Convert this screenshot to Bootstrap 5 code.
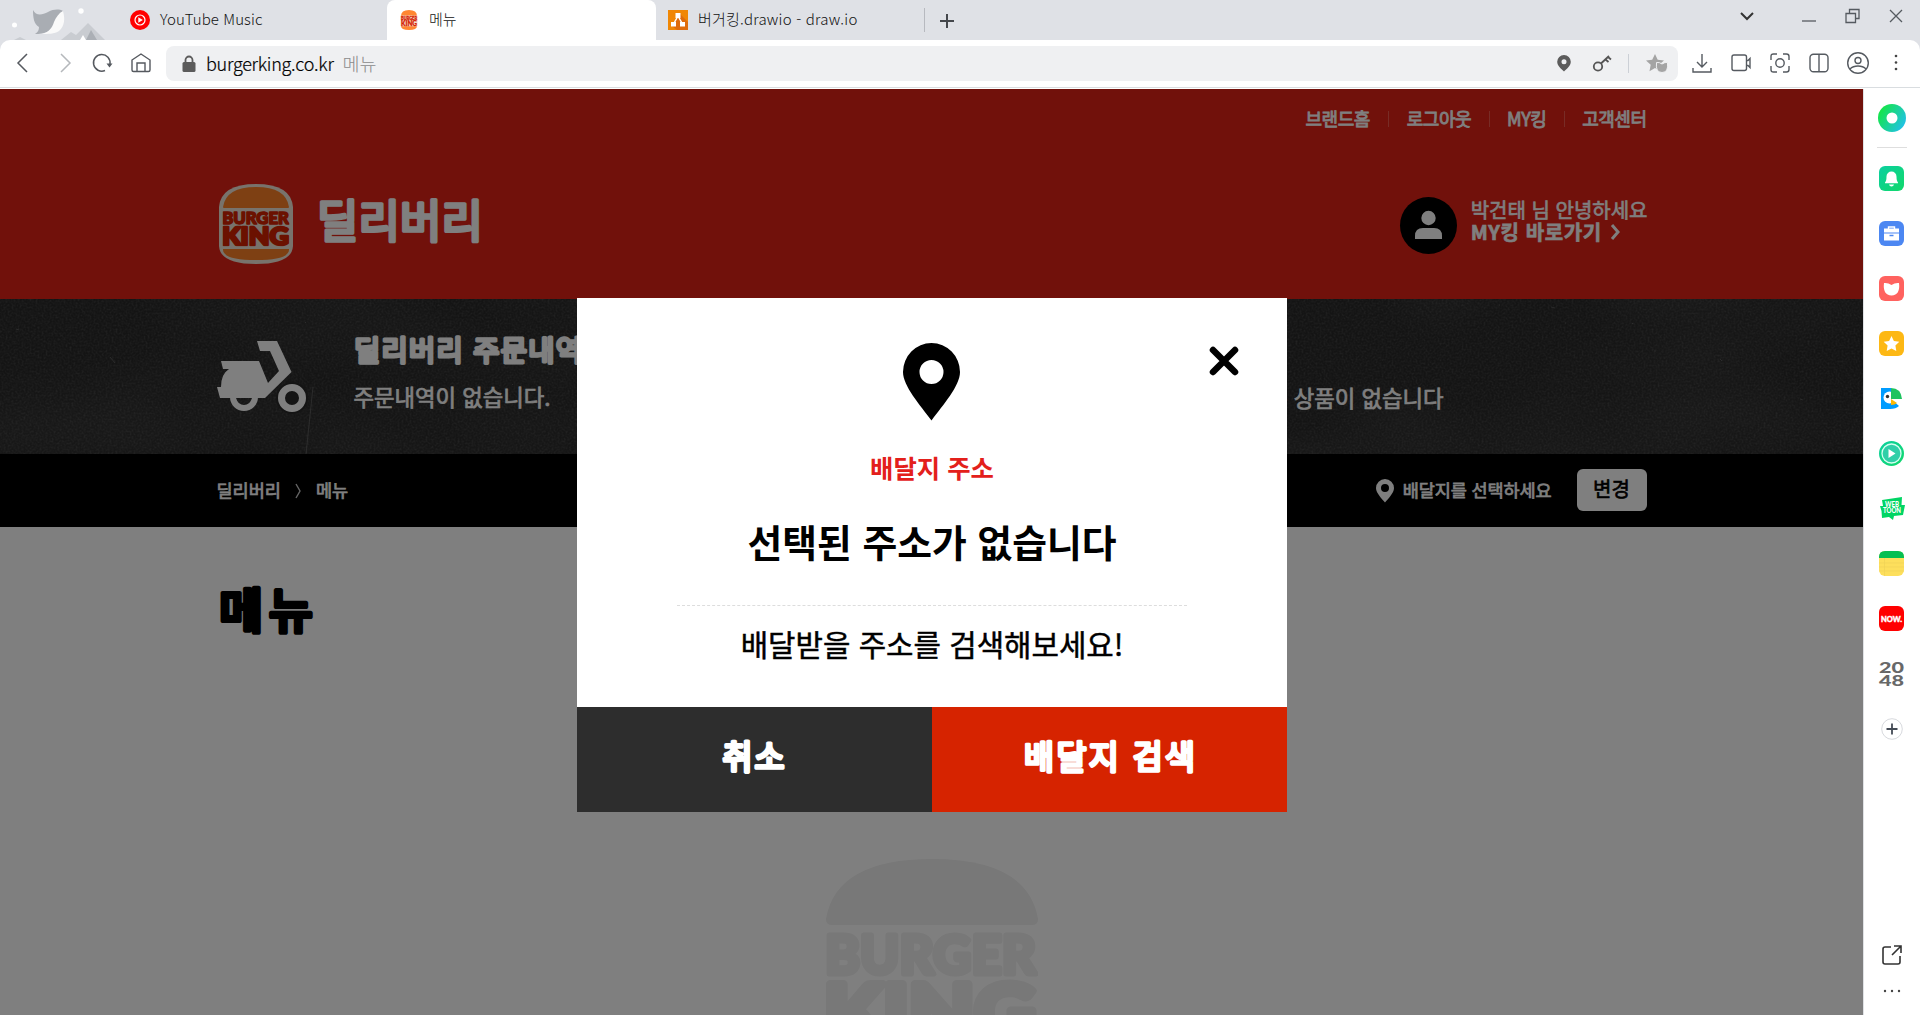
<!DOCTYPE html>
<html lang="ko">
<head>
<meta charset="utf-8">
<title>메뉴</title>
<link href="https://cdn.jsdelivr.net/npm/bootstrap@5.3.0/dist/css/bootstrap.min.css" rel="stylesheet">
<style>
  body{width:1920px;height:1015px;overflow:hidden;font-family:"Noto Sans CJK KR","Noto Sans",sans-serif;color:#000}
  svg{display:block;flex:none;overflow:visible}
  .tabstrip{height:40px;background:#dfe1e6;font-size:15px;font-weight:300;color:#111;line-height:37px}
  .tab-a{width:387px;padding-left:130px}
  .tab-b{width:269px;background:#fff;border-radius:8px 8px 0 0;padding-left:13px}
  .tab-c{width:269px;padding-left:12px}
  .tab-c::after{content:"";width:1.5px;height:24px;background:#b7b9bf;margin:8px 0 0 auto}
  .tab-ico{margin-top:10px}
  .scenery{position:absolute;left:0;top:0;overflow:hidden}
  .toolbar-row{height:48px;background:#fff;border-radius:10px 10px 0 0;border-bottom:1px solid #d9dde0;padding-left:11px}
  .toolbar-row>svg{margin-top:-1px}
  .chrome{background:linear-gradient(#dfe1e6 80px,#fff 80px);height:89px}
  .addr{width:1512px;height:35px;background:#eff0f2;border-radius:8px;margin-left:13px;padding-left:16px;font-size:18px;line-height:32px}
  .addr span{margin-top:-2px}
  .site{width:1863px;height:926px;position:relative;overflow:hidden;background:#fff}
  .wrap{width:1430px;margin:0 auto}
  .hdr{height:210px;background:#e22216;color:#fff}
  .util{height:58px;font-size:18px;letter-spacing:-.5px;-webkit-text-stroke:.8px #fff}
  .util i{width:1px;height:16px;background:#f0584c;margin:1px 18px 0 18px}
  .util i:nth-of-type(n+2){margin-right:17px}
  .brand-row{height:152px}
  .fat{font-family:"Noto Sans CJK KR",sans-serif;fill:currentColor;stroke:currentColor;stroke-linejoin:round;stroke-linecap:round}
  .hello{font-size:20px;line-height:22px;margin-left:14px;margin-right:-1px;margin-top:-5px;white-space:nowrap;-webkit-text-stroke:.6px #fff}
  .slate{height:155px;background:#292929;color:#fff;position:relative}
  .slate>svg{position:absolute;left:0;top:0}
  .slate .wrap{position:relative}
  .order{margin-left:48px;line-height:48px;margin-top:-10px;white-space:nowrap;font-size:22.3px;-webkit-text-stroke:.7px #fff}
  .crumbs{height:73px;background:#000;color:#fff;font-size:17.5px;line-height:28px;-webkit-text-stroke:.7px #fff}
  .crumbs span{margin-top:-2px}
  .change{width:70px;height:42px;border-radius:6px;background:#fff;color:#000;font-size:20px;line-height:39px;text-align:center;-webkit-text-stroke:.6px #000;margin:-1px 0 0 25px}
  .page-title{margin:0;padding-top:52px;height:112px;color:#000}
  .mark-bk{margin:220px auto 0}
  .shade{position:absolute;inset:0;background:rgba(0,0,0,.5);padding-top:209px}
  .popup{width:710px;height:514px;background:#fff;margin-left:577px;position:relative;text-align:center}
  .popup .close-x{position:absolute;left:632px;top:48px}
  .popup-body{height:409px;padding-top:45px}
  .lbl{font-size:25.4px;font-weight:700;line-height:40px;color:#e3201b;margin-top:26px}
  .big{font-size:37.8px;font-weight:700;line-height:56px;margin-top:26px}
  .dash{width:510px;border-top:1px dashed #ddd;margin:36px auto 0}
  .msg{font-size:29.8px;line-height:44px;margin-top:15px;-webkit-text-stroke:.5px #000}
  .pbtn{width:355px;height:105px}
  .dock{width:57px;height:926px;background:#fff;border-left:1px solid #dfe1e4;padding-right:1px}
  .dock .slot{height:55px;display:flex;align-items:center;justify-content:center}
</style>
<script src="https://cdn.jsdelivr.net/npm/bootstrap@5.3.0/dist/js/bootstrap.bundle.min.js"></script>
</head>
<body>
<svg width="0" height="0" style="position:absolute">
  <defs>
    <linearGradient id="gg" x1="0" y1="0.2" x2="1" y2="0.8"><stop offset="0" stop-color="#14e83c"/><stop offset="1" stop-color="#22bff0"/></linearGradient>
    <linearGradient id="gb" x1="0" y1="0" x2="1" y2="1"><stop offset="0" stop-color="#0bd0a0"/><stop offset="1" stop-color="#12d86a"/></linearGradient>
    <symbol id="words" viewBox="0 0 212 112">
      <g font-family="Lato,sans-serif" font-weight="900" stroke-linejoin="round" fill="currentColor" stroke="currentColor">
        <text x="-1" y="42" font-size="54" stroke-width="5" textLength="211" lengthAdjust="spacingAndGlyphs">BURGER</text>
        <text x="-2" y="107" font-size="76" stroke-width="8" textLength="212" lengthAdjust="spacingAndGlyphs">KING</text>
      </g>
    </symbol>
  </defs>
</svg>

<div class="chrome">
  <div class="tabstrip d-flex position-relative">
    <svg class="scenery" width="130" height="40"><circle cx="14.500" cy="25" r="2.500" fill="#fff"/><circle cx="81" cy="11" r="2.700" fill="#fff"/><path d="M33 10c3 6 9 5 15 2 6-3 11-3 15-1-4 5-6 10-9 15-4 6-10 8-19 8 3-2 4-4 4-7-5-3-6-9-6-17z" fill="#a9adb3"/><path d="M63 11c2 7 2 15-4 20-4 3-12 3-17 3 7-2 10-6 12-12 2-5 5-9 9-11z" fill="#fafafa"/><path d="M61 40l10-8 5 3 12-12 17 17z" fill="#c9ccd1"/><path d="M86 40l5-10 6 10z" fill="#abafb5"/><path d="M80 40l3-5 3 5z" fill="#fff"/><path d="M14 40l6-3 6 3z" fill="#c9ccd1"/></svg>
    <div class="tab-a d-flex"><svg width="20" height="20" viewBox="0 0 20 20" class="tab-ico"><circle cx="10" cy="10" r="10" fill="#f00"/><circle cx="10" cy="10" r="5" fill="none" stroke="#fff" stroke-width="1.200"/><path d="M8.300 7.300l4.500 2.700-4.500 2.700z" fill="#fff"/></svg><span style="margin-left:10px;letter-spacing:.1px">YouTube Music</span></div>
    <div class="tab-b d-flex"><svg width="18" height="20" viewBox="0 0 18 20" class="tab-ico"><path d="M1 6q0-6 8-6t8 6zM1 16h16q0 4-8 4t-8-4z" fill="#ff8732"/><path d="M.5 5.500h17v10.800H.5z" fill="#f3d9c8"/><g font-family="Lato" font-weight="900" fill="#d62300" stroke="#d62300" stroke-width=".3"><text x="1" y="9.800" font-size="5" textLength="16" lengthAdjust="spacingAndGlyphs">BURGER</text><text x="1" y="15.700" font-size="7.500" textLength="16" lengthAdjust="spacingAndGlyphs">KING</text></g></svg><span style="margin-left:11px">메뉴</span></div>
    <div class="tab-c d-flex"><svg width="20" height="20" viewBox="0 0 20 20" class="tab-ico"><rect width="20" height="20" fill="#f08705"/><path d="M12 4l8 8v8H9l-5-4z" fill="#df6c0c"/><path d="M10 6L5.500 14M10 6l4.500 8" stroke="#fff" stroke-width="1.500"/><path d="M7.500 3h5v5h-5zM3 12h5v4.500H3zM12 12h5v4.500h-5z" fill="#fff"/></svg><span style="margin-left:10px;letter-spacing:.2px">버거킹.drawio - draw.io</span></div>
    <svg width="16" height="16" viewBox="0 0 16 16" style="margin:13px 0 0 14px"><path d="M8 1v14M1 8h14" stroke="#44474c" stroke-width="2"/></svg>
    <div class="ms-auto d-flex">
      <svg width="190" height="40" fill="none" stroke="#555a60" stroke-width="1.300"><path d="M11 13l6 6 6-6" stroke="#333" stroke-width="2"/><path d="M72 21h14"/><path d="M116 13.500h9.500v9h-9.500zM119.500 13V9.500h9.500v9h-3"/><path d="M160 10l12 12M172 10l-12 12"/></svg>
    </div>
  </div>
  <div class="toolbar-row d-flex align-items-center">
    <svg width="24" height="24" fill="none" stroke="#55595f" stroke-width="1.500"><path d="M16 3L7 12l9 9"/></svg>
    <svg width="24" height="24" fill="none" stroke="#b5b8bc" stroke-width="1.500" style="margin-left:18px"><path d="M8 3l9 9-9 9"/></svg>
    <svg width="24" height="24" fill="none" stroke="#55595f" stroke-width="1.500" style="margin-left:14px"><path d="M14 19.500A8.300 8.300 0 1 1 19 13"/><path d="M15.500 12.500h6l-3 4z" fill="#55595f" stroke="none"/></svg>
    <svg width="24" height="24" fill="none" stroke="#55595f" stroke-width="1.400" style="margin-left:14px"><path d="M3 9l9-6 9 6v10q0 1.500-1.500 1.500h-15Q3 20.500 3 19zM8 20v-8h8v8"/></svg>
    <div class="addr d-flex align-items-center">
      <svg width="14" height="18" viewBox="0 0 14 18"><rect x="0.500" y="7" width="13" height="10" rx="1.500" fill="#5b5b5b"/><path d="M3.500 8V5a3.500 3.500 0 0 1 7 0v3" fill="none" stroke="#5b5b5b" stroke-width="1.800"/></svg>
      <span style="margin-left:10px;letter-spacing:-.28px;font-weight:300;-webkit-text-stroke:.2px">burgerking.co.kr</span><span style="margin-left:9px;color:#8b8b8b;font-weight:300;font-size:18.500px">메뉴</span>
      <svg width="130" height="35" class="ms-auto"><path d="M16 9a6.800 6.800 0 0 1 6.800 6.800c0 4-4.300 7.500-6.800 9.700-2.500-2.200-6.800-5.700-6.800-9.700A6.800 6.800 0 0 1 16 9zm0 4.200a2.500 2.500 0 1 0 0 5 2.500 2.500 0 0 0 0-5z" fill="#5c5c5c"/><g fill="none" stroke="#555" stroke-width="1.800"><circle cx="50" cy="20.500" r="4.200"/><path d="M53 17.500l8-7.500M57.500 13.500l3 2.500M60 11l3 2.500"/></g><path d="M80.500 8v19" stroke="#ccd0d6"/><path d="M107 8l2.700 5.800 6.300.7-4.700 4 .9 6.500-5.200-3-5.500 3.200 1.200-6.500-4.700-4.200 6.200-.7z" fill="#a4a4a4"/><path d="M108.500 16.500q3-.5 5.500 1.500 3-2 5.500-1.500 1.200 10-5.500 10t-5.500-10z" fill="#a4a4a4" stroke="#eff0f2"/></svg>
    </div>
    <div class="d-flex" style="gap:15px;margin:-1px 0 0 11.500px">
      <svg width="24" height="24" fill="none" stroke="#555a60" stroke-width="1.400"><path d="M12 3v13M7 11l5 5 5-5M3 17v4h18v-4"/></svg>
      <svg width="24" height="24" fill="none" stroke="#555a60" stroke-width="1.400"><rect x="3" y="4" width="14.500" height="15.500" rx="2"/><path d="M17.500 9.500h1.500l2-2v9l-2-2h-1.500"/></svg>
      <svg width="24" height="24" fill="none" stroke="#555a60" stroke-width="1.400"><path d="M3 9V5.500Q3 3 5.500 3H9M15 3h3.500Q21 3 21 5.500V9M21 15v3.500q0 2.500-2.500 2.500H15M9 21H5.500Q3 21 3 18.500V15"/><circle cx="12" cy="12" r="4.200"/></svg>
      <svg width="24" height="24" fill="none" stroke="#555a60" stroke-width="1.400"><rect x="3" y="3.300" width="18" height="17.500" rx="3.500"/><path d="M12 3v18"/></svg>
      <svg width="24" height="24" fill="none" stroke="#555a60" stroke-width="1.400"><circle cx="12" cy="12" r="10.300"/><circle cx="12" cy="9.500" r="3"/><path d="M4 18q3-3 8-3t8 3"/></svg>
      <svg width="24" height="24" fill="#444"><circle cx="11" cy="5" r="1.300"/><circle cx="11" cy="11.500" r="1.300"/><circle cx="11" cy="18" r="1.300"/></svg>
    </div>
  </div>
</div>

<div class="d-flex">
  <main class="site">
    <header class="hdr"><div class="wrap">
      <div class="util d-flex justify-content-end align-items-center"><span>브랜드홈</span><i></i><span>로그아웃</span><i></i><span>MY킹</span><i></i><span>고객센터</span></div>
      <div class="brand-row d-flex align-items-center">
        <svg width="76" height="82" viewBox="0 0 76 82" style="margin:2px 0 0 2px"><path d="M0 24Q2 1 37 1t37 23v39q-1 18-37 18T0 63z" fill="#f0e6d8"/><path d="M4 24Q7 4 37 4t33 20q0 1-1 1H5q-1 0-1-1zM4 66h66q1 11-33 11T4 66z" fill="#fd8127"/><g color="#d62300"><use href="#words" x="3.500" y="27.500" width="67" height="36"/></g></svg>
        <svg width="170" height="60" style="margin:0 0 2px 20px"><text class="fat" x="2" y="46" font-size="45" stroke-width="3.600" textLength="166">딜리버리</text></svg>
        <svg class="ms-auto" width="57" height="57" viewBox="0 0 57 57" style="margin-top:5px"><circle cx="28.500" cy="28.500" r="28.500"/><circle cx="28.500" cy="21" r="7.200" fill="#fff"/><path d="M15 42v-3q0-8 8-8h11q8 0 8 8v3z" fill="#fff"/></svg>
        <div class="hello"><div>박건태 님 안녕하세요</div><div class="fw-bold d-flex align-items-center" style="letter-spacing:.6px">MY킹 바로가기<svg width="14" height="18" style="margin:1px 0 0 7px" fill="none" stroke="#fff" stroke-width="3"><path d="M3 2l6 7-6 7"/></svg></div></div>
      </div>
    </div></header>
    <section class="slate">
      <svg width="1863" height="155"><filter id="n" x="0" y="0" width="100%" height="100%"><feTurbulence type="fractalNoise" baseFrequency=".5" numOctaves="3" seed="4"/><feColorMatrix values="0 0 0 0 1  0 0 0 0 1  0 0 0 0 1  .5 .3 0 0 -.33"/></filter><filter id="n2" x="0" y="0" width="100%" height="100%"><feTurbulence type="fractalNoise" baseFrequency=".005 .01" numOctaves="2" seed="9"/><feColorMatrix values="0 0 0 0 1  0 0 0 0 1  0 0 0 0 1  .4 0 0 0 -.16"/></filter><rect width="1863" height="155" filter="url(#n)" opacity=".4"/><rect width="1863" height="155" filter="url(#n2)" opacity=".3"/><g stroke="#777" stroke-width=".8" opacity=".7"><path d="M313 88l-7 67M110 58l5 6M16 30l3 1M1551 8l4 1M1565 24l1 0M1632 24l1 1M1654 52l2 0M1499 6l1 0M512 85l1 1M305 23l1 1M1720 60l2 2M1800 100l3 1"/></g></svg>
      <div class="wrap d-flex align-items-center h-100">
        <svg width="89" height="72" viewBox="0 0 89 72" fill="#fff"><path d="M40 0h20l14.500 31L48 57H3L0 46h4q0-13 8-18H6l-2-8h38l9 22 11-12-9-20H43z"/><path d="M13 56h28a14 14 0 0 1-28 0zm6 1q2 7 8 7t8-7z" fill-rule="evenodd"/><circle cx="75" cy="57" r="11" fill="#292929" stroke="#292929" stroke-width="10"/><circle cx="75" cy="57" r="10.500" fill="none" stroke="#fff" stroke-width="7"/></svg>
        <div class="order"><svg width="240" height="48"><text class="fat" x="0" y="37" font-size="28.500" stroke-width="3.300" textLength="228">딜리버리 주문내역</text></svg><div>주문내역이 없습니다.</div></div>
        <div class="order" style="margin:41px 203px 0 auto">담은 상품이 없습니다</div>
      </div>
    </section>
    <nav class="crumbs"><div class="wrap d-flex align-items-center h-100">
      <span>딜리버리</span><svg width="8" height="18" style="margin:1px 14px 0 13px" fill="none" stroke="#ccc" stroke-width="1.400"><path d="M2 2l4 7-4 7"/></svg><span>메뉴</span>
      <svg class="ms-auto" width="18" height="24" viewBox="0 0 18 24" style="margin-right:9px"><path d="M9 0a9 9 0 0 1 9 9c0 5-6 11-9 14.500C6 20 0 14 0 9a9 9 0 0 1 9-9zm0 5a4 4 0 1 0 0 8 4 4 0 0 0 0-8z" fill="#fff"/></svg><span style="letter-spacing:-.1px">배달지를 선택하세요</span>
      <div class="change">변경</div>
    </div></nav>
    <div class="wrap">
      <h1 class="page-title"><svg width="110" height="60"><text class="fat" x="2" y="49" font-size="48" stroke-width="4.200" textLength="94">메뉴</text></svg></h1>
      <svg class="mark-bk" width="212" height="200" viewBox="0 0 212 200" color="#f0f0f0"><path d="M0 60Q10 0 106 0t106 60q0 6-6 6H6q-6 0-6-6z" fill="currentColor"/><use href="#words" x="0" y="73" width="212" height="112"/></svg>
    </div>
    <div class="shade">
      <div class="popup">
        <svg class="close-x" width="30" height="30" fill="none" stroke="#000" stroke-width="6.500" stroke-linecap="round"><path d="M4 4l22 22M26 4L4 26"/></svg>
        <div class="popup-body">
          <svg class="mx-auto" width="58" height="78" viewBox="0 0 58 78"><path d="M28.500 0A28.500 29 0 0 1 57 29c0 14-17 33-28.500 48.500C17 62 0 43 0 29A28.500 29 0 0 1 28.500 0zm0 17a12 12 0 1 0 0 24 12 12 0 0 0 0-24z"/></svg>
          <div class="lbl">배달지 주소</div>
          <div class="big">선택된 주소가 없습니다</div>
          <div class="dash"></div>
          <div class="msg">배달받을 주소를 검색해보세요!</div>
        </div>
        <div class="d-flex text-white"><div class="pbtn" style="background:#2d2d2d"><svg width="355" height="105"><text class="fat" x="176.500" y="62" font-size="32.500" stroke-width="3.600" text-anchor="middle" textLength="62">취소</text></svg></div><div class="pbtn" style="background:#d62300"><svg width="355" height="105"><text class="fat" x="177.500" y="62" font-size="32.500" stroke-width="3.300" text-anchor="middle" textLength="171">배달지 검색</text></svg></div></div>
      </div>
    </div>
  </main>
  <aside class="dock d-flex flex-column">
    <div style="height:58px;padding:15px 0 0 14px"><svg width="28" height="28"><circle cx="14" cy="14" r="14" fill="url(#gg)"/><circle cx="14" cy="14" r="5.500" fill="#fff"/></svg></div>
    <div style="width:30px;height:1px;background:#dedede;margin:0 0 3px 13px"></div>
    <div class="slot"><svg width="25" height="25"><rect width="25" height="25" rx="6" fill="url(#gb)"/><path d="M6 16.500q1.500-1.500 1.500-6a5 5 0 0 1 10 0q0 4.500 1.500 6v.8H6zM10 18.500h5q-.5 2-2.500 2t-2.500-2z" fill="#fff"/></svg></div>
    <div class="slot"><svg width="25" height="25"><rect width="25" height="25" rx="6" fill="#4c87f2"/><path d="M9.500 8V6h6v2" fill="none" stroke="#fff" stroke-width="1.400"/><path d="M5 7.500h15v4H5zM5 12.500h15v7H5z" fill="#fff"/><path d="M10.500 14.500h4" stroke="#4c87f2" stroke-width="1.500"/></svg></div>
    <div class="slot"><svg width="25" height="25"><rect width="25" height="25" rx="6" fill="#ff625f"/><path d="M5 7q4-.5 7.500 2Q16 6.500 20 7q1.500 12-7.500 12.500Q3.500 19 5 7z" fill="#fff"/></svg></div>
    <div class="slot"><svg width="25" height="25"><rect width="25" height="25" rx="6" fill="#fdb814"/><path d="M12.500 5l2.400 4.900 5.400.8-3.900 3.800.9 5.400-4.800-2.500-4.800 2.500.9-5.400-3.900-3.800 5.400-.8z" fill="#fff"/></svg></div>
    <div class="slot"><svg width="25" height="25"><path d="M2 2h10v21H2V7z" fill="#009cff"/><path d="M11 12l9 8q-3 3-9 3z" fill="#009cff"/><circle cx="10.500" cy="11.500" r="6" fill="#fff"/><path d="M12 2q10 0 11 11H12z" fill="#1ec35f"/><path d="M12 13l6 4q-2 2-6 2z" fill="#ffb800"/><circle cx="8.500" cy="10.500" r="1.700" fill="#333"/></svg></div>
    <div class="slot"><svg width="25" height="25"><circle cx="12.500" cy="12.500" r="12.500" fill="url(#gb)"/><circle cx="12.500" cy="12.500" r="9.500" fill="#2fcfa8" stroke="#d4fff0" stroke-width="1.300"/><path d="M9.500 8l7 4.500-7 4.500z" fill="#fff"/></svg></div>
    <div class="slot"><svg width="26" height="25"><path d="M3 4l20-3-.5 8H26l-2 10-9 1-1 4-4-3-7 1-.5-7L1 10h3z" fill="#00d564"/><g font-family="Lato" font-weight="900" font-size="7" fill="#fff"><text x="6" y="11" textLength="14" lengthAdjust="spacingAndGlyphs">WEB</text><text x="4" y="17.200" textLength="18" lengthAdjust="spacingAndGlyphs">TOON</text></g></svg></div>
    <div class="slot"><svg width="25" height="25"><rect width="25" height="25" rx="6" fill="#fddf5c"/><path d="M0 7V6q0-6 6-6h13q6 0 6 6v1z" fill="#06bf52"/><path d="M0 12h25M0 16h25M0 20h25M5.500 7v18" stroke="#efd256" stroke-width=".7"/></svg></div>
    <div class="slot"><svg width="25" height="25"><rect width="25" height="25" rx="6" fill="#f00"/><text x="2" y="15.500" font-family="Lato" font-weight="900" font-size="7.500" fill="#fff" stroke="#fff" stroke-width=".4" textLength="21" lengthAdjust="spacingAndGlyphs">NOW.</text></svg></div>
    <div class="slot"><svg width="25" height="26" font-family="Lato" font-weight="900" font-size="15.500" fill="#686868"><text x="0" y="11.500" textLength="25" lengthAdjust="spacingAndGlyphs">20</text><text x="0" y="25" textLength="25" lengthAdjust="spacingAndGlyphs">48</text></svg></div>
    <div class="slot"><svg width="22" height="22"><circle cx="11" cy="11" r="10.300" fill="#fff" stroke="#d8dade"/><path d="M11 5.500v11M5.500 11h11" stroke="#444b55" stroke-width="1.800"/></svg></div>
    <svg width="22" height="22" class="mx-auto" style="margin-top:188px" fill="none" stroke="#333" stroke-width="1.600"><path d="M10 3H4Q2 3 2 5v13q0 2 2 2h13q2 0 2-2v-6M13 2h7v7M20 2l-9 9"/></svg>
    <svg width="18" height="6" class="mx-auto" style="margin-top:22px" fill="#444"><circle cx="2" cy="3" r="1.200"/><circle cx="9" cy="3" r="1.200"/><circle cx="16" cy="3" r="1.200"/></svg>
  </aside>
</div>
</body>
</html>
